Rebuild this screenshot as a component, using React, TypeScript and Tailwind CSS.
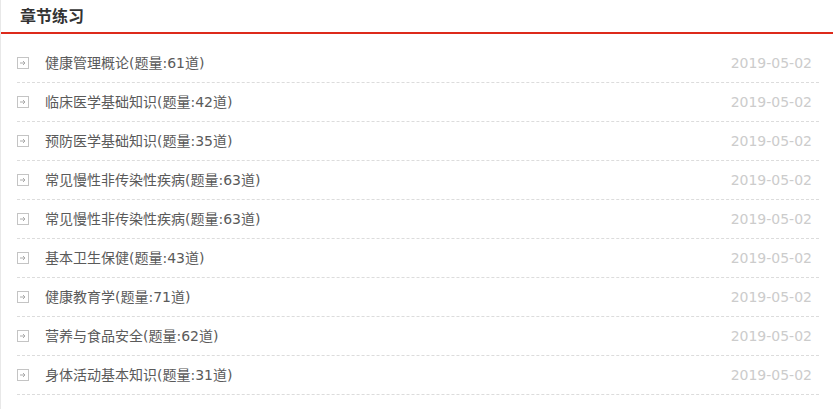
const items = [
  { title: '健康管理概论(题量:61道)', date: '2019-05-02' },
  { title: '临床医学基础知识(题量:42道)', date: '2019-05-02' },
  { title: '预防医学基础知识(题量:35道)', date: '2019-05-02' },
  { title: '常见慢性非传染性疾病(题量:63道)', date: '2019-05-02' },
  { title: '常见慢性非传染性疾病(题量:63道)', date: '2019-05-02' },
  { title: '基本卫生保健(题量:43道)', date: '2019-05-02' },
  { title: '健康教育学(题量:71道)', date: '2019-05-02' },
  { title: '营养与食品安全(题量:62道)', date: '2019-05-02' },
  { title: '身体活动基本知识(题量:31道)', date: '2019-05-02' },
];

function EnterIcon() {
  return (
    <svg width="12" height="12" viewBox="0 0 12 12" className="shrink-0">
      <rect x="0.5" y="0.5" width="11" height="11" fill="none" stroke="#c4c4c4" />
      <path d="M3 6h5M6 4l2 2-2 2" fill="none" stroke="#aaa" strokeWidth="1" />
    </svg>
  );
}

export default function App() {
  return (
    <div
      className="w-[833px] h-[409px] bg-white border-l border-[#e8e8e8] overflow-hidden"
      style={{ fontFamily: '"DejaVu Sans", "Noto Sans CJK SC", sans-serif' }}
    >
      <div className="h-[34px] flex items-center pl-[19px] pt-[1px] border-b-2 border-[#dd2a1b]">
        <h2 className="text-[16px] font-bold text-[#333] leading-none">章节练习</h2>
      </div>
      <ul className="mt-[10px] ml-[16px] w-[802px]">
        {items.map((item, index) => (
          <li
            key={index}
            className="h-[39px] flex items-center border-b border-dashed border-[#dcdcdc]"
          >
            <EnterIcon />
            <span className="ml-[16px] text-[14px] text-[#5a5a5a] flex-1">{item.title}</span>
            <span className="mr-[7px] text-[14px] text-[#cccccc]">{item.date}</span>
          </li>
        ))}
      </ul>
    </div>
  );
}
